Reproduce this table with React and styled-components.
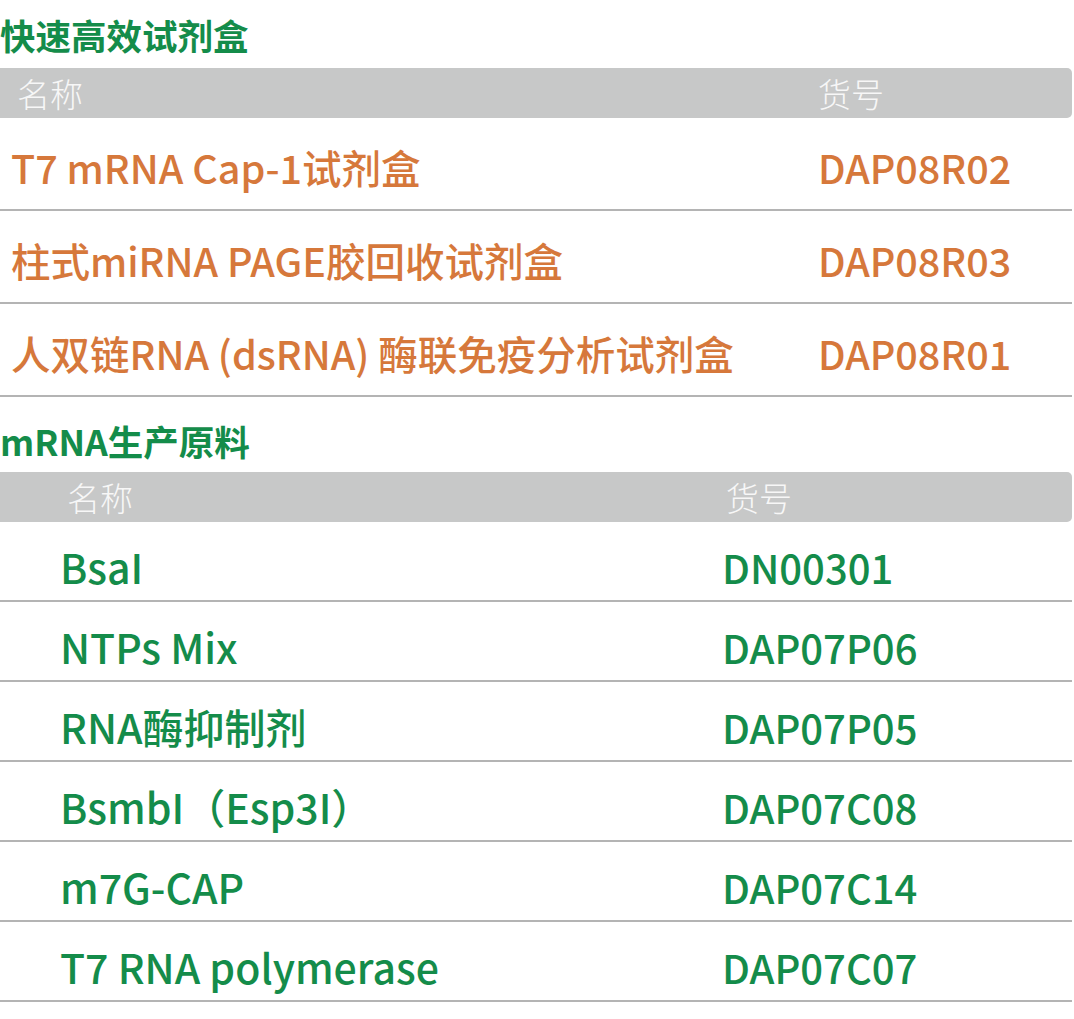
import React from 'react';
import styled, { createGlobalStyle } from 'styled-components';

const GlobalStyle = createGlobalStyle`
  body {
    margin: 0;
    background: #fff;
    font-family: "Noto Sans CJK SC", "Noto Sans", sans-serif;
  }
`;

const Page = styled.div`
  width: 1072px;
  display: flex;
  flex-direction: column;
`;

const Title = styled.h2`
  margin: 0;
  height: ${p => p.$height}px;
  display: flex;
  align-items: center;
  padding-top: ${p => p.$top}px;
  box-sizing: border-box;
  font-size: 35.5px;
  font-weight: 700;
  color: #148c4a;
`;

const HeadBar = styled.div`
  display: grid;
  grid-template-columns: ${p => p.$codeLeft}px 1fr;
  height: 50px;
  align-items: center;
  background: #c7c8c8;
  border-radius: 0 5px 5px 0;
  color: #f7f7f7;
  font-size: 33px;
  font-weight: 300;
  line-height: 1;
`;

const HeadCell = styled.div`
  padding-left: ${p => p.$indent || 0}px;
`;

const Row = styled.div`
  display: grid;
  grid-template-columns: ${p => p.$codeLeft}px 1fr;
  height: ${p => p.$height}px;
  box-sizing: border-box;
  padding-top: ${p => p.$pad}px;
  align-items: center;
  border-bottom: 2px solid #b4b4b4;
  color: ${p => p.$color};
  font-weight: 500;
  line-height: 1.2;
`;

const NameCell = styled.div`
  padding-left: ${p => p.$indent}px;
  font-size: ${p => p.$size}px;
  white-space: nowrap;
`;

const CodeCell = styled.div`
  font-size: ${p => p.$size}px;
  white-space: nowrap;
`;

const kits = [
  ['T7 mRNA Cap-1试剂盒', 'DAP08R02'],
  ['柱式miRNA PAGE胶回收试剂盒', 'DAP08R03'],
  ['人双链RNA (dsRNA) 酶联免疫分析试剂盒', 'DAP08R01'],
];

const materials = [
  ['BsaI', 'DN00301'],
  ['NTPs Mix', 'DAP07P06'],
  ['RNA酶抑制剂', 'DAP07P05'],
  ['BsmbI（Esp3I）', 'DAP07C08'],
  ['m7G-CAP', 'DAP07C14'],
  ['T7 RNA polymerase', 'DAP07C07'],
];

function Table({ rows, codeLeft, headIndent, codeHeadIndent, nameIndent, nameSize, codeSize, rowHeight, rowPad, color }) {
  return (
    <div>
      <HeadBar $codeLeft={codeLeft}>
        <HeadCell $indent={headIndent}>名称</HeadCell>
        <HeadCell $indent={codeHeadIndent}>货号</HeadCell>
      </HeadBar>
      {rows.map(([name, code]) => (
        <Row key={code} $codeLeft={codeLeft} $height={rowHeight} $pad={rowPad} $color={color}>
          <NameCell $indent={nameIndent} $size={nameSize}>{name}</NameCell>
          <CodeCell $size={codeSize}>{code}</CodeCell>
        </Row>
      ))}
    </div>
  );
}

export default function App() {
  return (
    <Page>
      <GlobalStyle />
      <Title $height={68} $top={0}>快速高效试剂盒</Title>
      <Table
        rows={kits}
        codeLeft={818}
        headIndent={17}
        codeHeadIndent={0}
        nameIndent={11}
        nameSize={39.5}
        codeSize={39.5}
        rowHeight={93}
        rowPad={6}
        color="#d6783b"
      />
      <Title $height={75} $top={12}>mRNA生产原料</Title>
      <Table
        rows={materials}
        codeLeft={722}
        headIndent={67}
        codeHeadIndent={4}
        nameIndent={60}
        nameSize={41}
        codeSize={40}
        rowHeight={80}
        rowPad={12}
        color="#148c4a"
      />
    </Page>
  );
}
